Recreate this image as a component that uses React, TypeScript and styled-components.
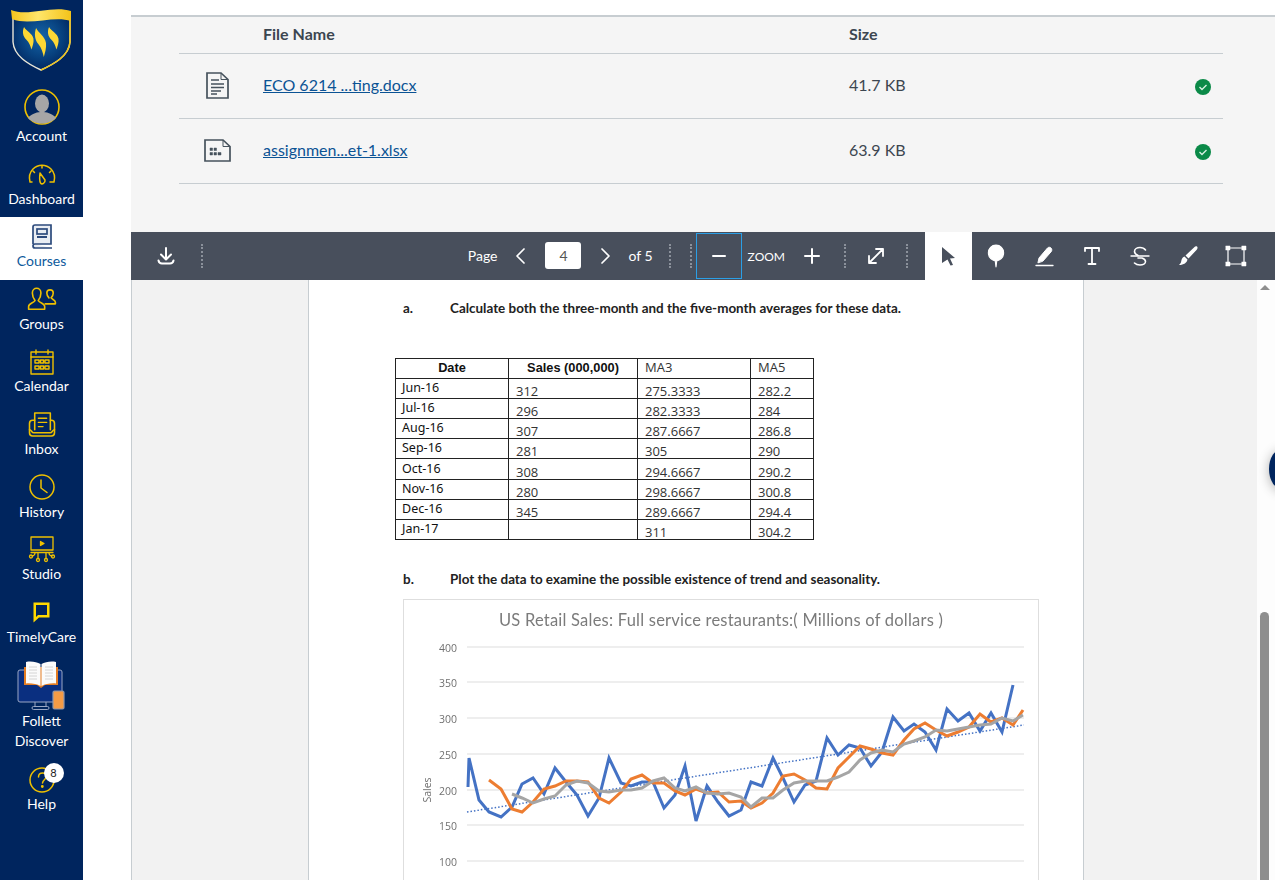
import { FC, ReactNode } from "react";
import styled, { createGlobalStyle } from "styled-components";

const NAVY = "#00255e";
const GOLD = "#eec000";
const BAR = "#484f5c";
const FLAME = "M1 0 C 3 5 9 8 10 15 C 10.500 20 9 25 8 29 C 7 24 6 20 3 16 C 0 12 -1 6 1 0 Z";

// アイコン
const Stroke: FC<{ w?: number; h?: number; box: string; color?: string; sw?: number; children: ReactNode }> = ({
  w = 30,
  h = 30,
  box,
  color = GOLD,
  sw = 1.5,
  children,
}) => (
  <svg width={w} height={h} viewBox={box} fill="none" stroke={color} strokeWidth={sw} strokeLinecap="round" strokeLinejoin="round">
    {children}
  </svg>
);

const LogoIcon = () => (
  <svg width="62" height="64" viewBox="0 0 62 64">
    <defs>
      <radialGradient id="shieldFill" cx="50%" cy="42%" r="60%">
        <stop offset="0%" stopColor="#1565a8" />
        <stop offset="60%" stopColor="#07417f" />
        <stop offset="100%" stopColor="#00255e" />
      </radialGradient>
      <linearGradient id="bannerFill" x1="0" x2="1" y1="0" y2="0">
        <stop offset="0%" stopColor="#f7c51c" />
        <stop offset="45%" stopColor="#ffe66b" />
        <stop offset="100%" stopColor="#f3c31a" />
      </linearGradient>
    </defs>
    <path d="M3 5 C 20 12 42 1 60 6 L60 34 C59 48 44 56 31 62 C18 56 4 48 3 34 Z" fill="url(#shieldFill)" stroke="#e8e6d8" strokeWidth="1.4" />
    <path d="M60 8 L60 34 C59 48 44 56 31 62" fill="none" stroke="#f0c419" strokeWidth="1.6" />
    <path d="M1 2 C 18 9 42 -3 61 3 L61 13 C 44 7 20 18 2 11 Z" fill="url(#bannerFill)" />
    <path d={FLAME} fill="#fdd835" transform="translate(13 19) scale(1.05 .78)" />
    <path d={FLAME} fill="#fdd835" transform="translate(25 20) scale(1.1 1)" />
    <path d={FLAME} fill="#fdd835" transform="translate(38 19) scale(1.05 .78)" />
  </svg>
);

const AvatarIcon = () => (
  <AvatarSvg width="36" height="36" viewBox="0 0 36 36">
    <circle cx="18" cy="18" r="17" fill={NAVY} stroke={GOLD} strokeWidth="1.6" />
    <ellipse cx="18" cy="14.5" rx="7" ry="9" fill="#a6a6a6" />
    <path d="M4 29 C 8 24 14 23 18 23 C 22 23 28 24 32 29 C 28 33 23 34.5 18 34.5 C 13 34.5 8 33 4 29 Z" fill="#a6a6a6" />
  </AvatarSvg>
);

const DashboardIcon = () => (
  <Stroke box="0 0 30 24" h={24}>
    <path d="M5 20 H3 C1.5 14 3 10 6 7 C 11 2 19 2 24 7 C 27 10 28.5 14 27 20 H23" />
    <path d="M15 4 V6 M6 9 L7.5 10.5 M24 9 L22.5 10.5" />
    <path d="M13 11 L18 18 C18.5 21 15 23 13.5 21 C 12.5 19 12.5 15 13 11 Z" />
  </Stroke>
);

const CoursesIcon = () => (
  <svg width="22" height="26" viewBox="0 0 22 26" fill="none" stroke="#2c4a7c" strokeWidth="1.7">
    <path d="M2 20 V3 C2 2 3 1 4 1 H20 V20 H4 C3 20 2 21 2 22 C2 23 3 24 4 24 H21" fill="#e9edf3" />
    <rect x="6" y="5" width="10" height="5" />
    <path d="M6 13 H16" strokeWidth="2" />
  </svg>
);

const GroupsIcon = () => (
  <Stroke box="0 0 28 22" h={24}>
    <path d="M1.5 20.5 V18 C1.5 15 6 15 7.5 12.5 C5.5 10 5 8 5 5.5 C5 2.5 7 1 9 1 C11 1 13 2.5 13 5.5 C13 8 12.5 10 10.5 12.5 C12 15 16.5 15 16.5 18 V20.5 Z" />
    <path d="M17 15.5 H26.5 V14 C26.5 12 23.5 11.5 22.5 10 C24 8.5 24.5 7 24.5 5.5 C24.5 3.5 23 2.5 21.5 2.5 C20 2.5 18.5 3.5 18.5 5.5 C18.5 7 19 8.5 20.5 10" />
  </Stroke>
);

const CalendarIcon = () => (
  <Stroke box="0 0 24 26" h={26} sw={1.4}>
    <rect x="1" y="3" width="22" height="22" />
    <path d="M1 8 H23 M6 1 V5 M18 1 V5" />
    <path d="M5 11 H9 V14 H5 Z M10.500 11 H13.500 V14 H10.500 Z M15 11 H19 V14 H15 Z M5 17 H9 V20 H5 Z M10.500 17 H13.500 V20 H10.500 Z M15 17 H19 V20 H15 Z" />
  </Stroke>
);

const InboxIcon = () => (
  <Stroke box="0 0 26 24" h={25}>
    <path d="M6 17 V1 H21 V17" />
    <path d="M9.500 6 H17.500 M9.500 10 H17.500 M9.500 14 H14" strokeWidth="1.3" />
    <path d="M6 8 H4 C2.500 8 1 9 1 11 V20 C1 22 2 23 4 23 H22 C24 23 25 22 25 20 V11 C25 9 23.500 8 22 8 H21" />
    <path d="M1 17 C3 17 3 20 5 20 H21 C23 20 23 17 25 17" />
  </Stroke>
);

const HistoryIcon = () => (
  <Stroke box="0 0 26 26" h={26}>
    <circle cx="13" cy="13" r="12" />
    <path d="M12 6 V14 L18 18.500" />
  </Stroke>
);

const StudioIcon = () => (
  <Stroke box="0 0 26 27" h={27} sw={1.3}>
    <path d="M2 1 H24 V14 H2 Z M2 16.500 H24" />
    <path d="M11.500 5.500 L15 7.500 L11.500 9.500 Z" fill={GOLD} />
    <path d="M9 17 V22 M17 17 V22 M6 17 C6 19 4 20 3 20 M20 17 C20 19 22 20 23 20" />
    <circle cx="2" cy="20.500" r="1.500" />
    <circle cx="9" cy="24" r="1.500" />
    <circle cx="17" cy="24" r="1.500" />
    <circle cx="24" cy="20.500" r="1.500" />
  </Stroke>
);

const TimelyCareIcon = () => (
  <svg width="17" height="21" viewBox="0 0 17 21">
    <path d="M0.500 0.500 H16.500 V15.500 H6 L0.500 20.500 Z" fill="#ffd900" />
    <path d="M3 3 H14 V13 H5 L3 15 Z" fill={NAVY} />
  </svg>
);

const FollettIcon = () => (
  <svg width="50" height="50" viewBox="0 0 50 50">
    <rect x="1" y="9" width="44" height="32" rx="2" fill="#0a2f80" stroke="#9aa7c4" strokeWidth="1" />
    <path d="M18 41 V46 M29 41 V46" stroke="#9aa7c4" />
    <rect x="15" y="45.500" width="17" height="3" rx="1.500" fill="none" stroke="#9aa7c4" />
    <path d="M7 6 H41 V24 H28 L24 27 L20 24 H7 Z" fill="#e37c23" />
    <path d="M9 1 C 14 0 20 1 23.500 3 V25 C 20 23 14 22 9 22.500 Z M39 1 C 34 0 28 1 24.500 3 V25 C 28 23 34 22 39 22.500 Z" fill="#fbfbfb" />
    <path d="M12 6 H20 M12 9 H20 M12 12 H20 M12 15 H20 M12 18 H20 M28 6 H36 M28 9 H36 M28 12 H36 M28 15 H36 M28 18 H36" stroke="#d4d4d4" strokeWidth="1" />
    <rect x="36" y="30" width="11" height="18" rx="1.500" fill="#f59b45" stroke="#8d97ad" strokeWidth="1.2" />
  </svg>
);

const HelpIcon = () => (
  <Stroke box="0 0 26 26" h={26}>
    <circle cx="13" cy="13" r="12" />
    <path d="M9.500 10 C9.500 7.500 11 6 13.500 6 C16 6 17.500 7.500 17.500 9.500 C17.500 12 14 12.500 13.500 16" />
    <circle cx="13.300" cy="19.500" r="0.700" fill={GOLD} />
  </Stroke>
);

const DocFileIcon = () => (
  <svg width="23" height="27" viewBox="0 0 23 27" fill="none" stroke="#46525c" strokeWidth="1.700">
    <path d="M1 1 H15 L22 7.500 V26 H1 Z" />
    <path d="M15 1 V7.500 H22" strokeWidth="1" />
    <path d="M5 8 H13 M5 12 H18 M5 15.500 H18 M5 19 H15 M5 22 H11" strokeWidth="1.500" />
  </svg>
);

const SheetFileIcon = () => (
  <svg width="27" height="23" viewBox="0 0 27 23" fill="none" stroke="#46525c" strokeWidth="1.700">
    <path d="M1 1 H19 L26 7.500 V22 H1 Z" />
    <path d="M19 1 V7.500 H26" strokeWidth="1" />
    <path d="M6 9 H8.500 V11.500 H6 Z M10 9 H12.500 V11.500 H10 Z M6 13.500 H8.500 V16 H6 Z M10 13.500 H12.500 V16 H10 Z M14 13.500 H17 V16 H14 Z" fill="#46525c" strokeWidth="0.500" />
  </svg>
);

const CheckIcon = () => (
  <CheckSvg width="16" height="16" viewBox="0 0 16 16">
    <circle cx="8" cy="8" r="8" fill="#0b8a48" />
    <path d="M4.500 8 L7 10.500 L11.500 6" fill="none" stroke="#d6f0e1" strokeWidth="1.400" />
  </CheckSvg>
);

// ツールバーのアイコン
const White: FC<{ size?: number; sw?: number; children: ReactNode }> = ({ size = 22, sw = 2, children }) => (
  <svg width={size} height={size} viewBox="0 0 22 22" fill="none" stroke="#fff" strokeWidth={sw} strokeLinecap="round" strokeLinejoin="round">
    {children}
  </svg>
);

const toolIcons: ReactNode[] = [
  <White key="pin" size={24}>
    <path d="M11 21 L10.300 15.500 C7 14.500 4 12 4 8 C4 4 7 1 11 1 C15 1 18 4 18 8 C18 12 15 14.500 11.700 15.500 Z" fill="#fff" stroke="#fff" strokeWidth="1" />
  </White>,
  <White key="highlighter">
    <path d="M3 20.500 H20" strokeWidth="1.300" />
    <path d="M5 17.500 L6 13 L14.500 3 C15.500 2 17 2 18 3 C19 4 19 5.500 18.300 6.500 L10 16 Z" fill="#fff" stroke="#fff" strokeWidth="1" />
  </White>,
  <White key="text">
    <path d="M4 6 V3 H18 V6 M11 3 V19 M7.500 19 H14.500" strokeWidth="1.800" />
  </White>,
  <White key="strike">
    <path d="M2 11 H20" strokeWidth="1.400" />
    <path d="M16.500 5 C15 3 13 2.500 11 2.500 C8 2.500 5.500 4 5.500 6.500 C5.500 8.500 7 9.500 9 10.500 M9 13 H13 C15.500 14 16.500 15 16.500 16.500 C16.500 18.500 14 20 11 20 C9 20 7 19.500 5.500 18" strokeWidth="1.600" />
  </White>,
  <White key="brush">
    <path d="M20 1.500 C21 2.500 20.500 4 19.500 5 L11.500 13.500 L8.500 10.500 L17 2.500 C18 1.500 19 1 20 1.500 Z M7.500 11.500 L10.500 14.500 C10 17.500 7 20 2 20 C4 18.500 4 17 4.500 15 C5 13 6 12 7.500 11.500 Z" fill="#fff" stroke="none" />
  </White>,
  <White key="rect">
    <path d="M3 3 H19 V19 H3 Z" strokeWidth="1.200" />
    <path d="M1 1 H5 V5 H1 Z M17 1 H21 V5 H17 Z M1 17 H5 V21 H1 Z M17 17 H21 V21 H17 Z" fill="#fff" strokeWidth="0.500" />
  </White>,
];

// データ
const navItems: { label: string; icon: ReactNode; active?: boolean }[] = [
  { label: "Account", icon: <AvatarIcon /> },
  { label: "Dashboard", icon: <DashboardIcon /> },
  { label: "Courses", icon: <CoursesIcon />, active: true },
  { label: "Groups", icon: <GroupsIcon /> },
  { label: "Calendar", icon: <CalendarIcon /> },
  { label: "Inbox", icon: <InboxIcon /> },
  { label: "History", icon: <HistoryIcon /> },
  { label: "Studio", icon: <StudioIcon /> },
  { label: "TimelyCare", icon: <TimelyCareIcon /> },
];

const files = [
  { name: "ECO 6214 ...ting.docx", size: "41.7 KB", icon: <DocFileIcon /> },
  { name: "assignmen...et-1.xlsx", size: "63.9 KB", icon: <SheetFileIcon /> },
];

const rows = [
  ["Jun-16", "312", "275.3333", "282.2"],
  ["Jul-16", "296", "282.3333", "284"],
  ["Aug-16", "307", "287.6667", "286.8"],
  ["Sep-16", "281", "305", "290"],
  ["Oct-16", "308", "294.6667", "290.2"],
  ["Nov-16", "280", "298.6667", "300.8"],
  ["Dec-16", "345", "289.6667", "294.4"],
  ["Jan-17", "", "311", "304.2"],
];

// グラフ(ページ座標そのまま)
const blue =
  "468,787 469,758 479,800 489,812 501,817 512,807 522,784 533,778 544,794 555,768 566,782 577,795 588,816 599,798 609,758 621,783 631,786 642,782 653,782 664,808 675,795 685,766 696,821 707,786 718,802 729,816 741,810 751,782 762,786 773,758 783,778 794,802 805,785 816,781 827,738 838,755 849,745 860,748 871,766 882,752 893,717 904,731 914,724 925,732 936,750 947,709 958,721 969,713 980,731 991,713 1002,732 1013,685";
const orange =
  "489,780 501,789 512,809 522,812 533,802 544,789 555,786 566,781 577,781 588,782 599,798 609,803 621,792 631,779 642,775 653,783 664,783 675,791 685,795 696,789 707,793 718,792 729,802 741,801 751,808 762,803 773,793 783,776 794,774 805,780 816,788 827,789 838,768 849,757 860,746 871,749 882,753 893,755 904,740 914,729 925,723 936,730 947,736 958,732 969,727 980,714 991,722 1002,718 1013,725 1023,710";
const gray =
  "512,794 522,798 533,803 544,799 555,796 566,785 577,781 588,783 599,791 609,792 621,790 631,790 642,788 653,781 664,778 675,788 685,791 696,787 707,793 718,794 729,793 741,797 751,807 762,798 773,798 783,790 794,783 805,781 816,781 827,781 838,777 849,772 860,760 871,753 882,750 893,752 904,744 914,741 925,737 936,730 947,731 958,729 969,727 980,725 991,724 1002,718 1013,721 1023,715";
const ticks = [
  [400, 647],
  [350, 682],
  [300, 718],
  [250, 754],
  [200, 790],
  [150, 825],
  [100, 861],
];

const SalesChart = () => (
  <ChartSvg width="634" height="290" viewBox="404 600 634 290">
    <text x="721" y="626" textAnchor="middle" fontFamily="Lato, sans-serif" fontSize="16.500" letterSpacing="0.22" fill="#7b7b7b">
      US Retail Sales: Full service restaurants:( Millions of dollars )
    </text>
    {ticks.map(([v, y]) => (
      <g key={v}>
        <line x1="467" x2="1024" y1={y} y2={y} stroke="#e8e8e8" strokeWidth="1.500" />
        <text x="457" y={y + 4.500} textAnchor="end" fontFamily="Open Sans, sans-serif" fontSize="10.500" fill="#707070">
          {v}
        </text>
      </g>
    ))}
    <text transform="translate(431 790) rotate(-90)" textAnchor="middle" fontFamily="Open Sans, sans-serif" fontSize="10.500" fill="#707070">
      Sales
    </text>
    <line x1="467" y1="812" x2="1024" y2="725" stroke="#4472c4" strokeWidth="1.500" strokeDasharray="1.500 2" />
    <polyline points={blue} fill="none" stroke="#4472c4" strokeWidth="3" />
    <polyline points={orange} fill="none" stroke="#ed7d31" strokeWidth="3" />
    <polyline points={gray} fill="none" stroke="#a5a5a5" strokeWidth="3" />
  </ChartSvg>
);

const App: FC = () => (
  <>
    <GlobalStyle />
    <Shell>
      <SideNav>
        <LogoBox>
          <LogoIcon />
        </LogoBox>
        {navItems.map((item) => (
          <NavItem key={item.label} $active={item.active}>
            <NavIcon>{item.icon}</NavIcon>
            <NavLabel $active={item.active}>{item.label}</NavLabel>
          </NavItem>
        ))}
        <NavItem $tall>
          <NavIcon $tall>
            <FollettIcon />
          </NavIcon>
          <NavLabel>Follett</NavLabel>
          <NavLabel>Discover</NavLabel>
        </NavItem>
        <NavItem>
          <NavIcon>
            <HelpIcon />
            <Badge>8</Badge>
          </NavIcon>
          <NavLabel>Help</NavLabel>
        </NavItem>
      </SideNav>

      <Main>
        <FilePanel>
          <FileHead>
            <span />
            <HeadCell>File Name</HeadCell>
            <HeadCell>Size</HeadCell>
          </FileHead>
          {files.map((file) => (
            <FileRow key={file.name}>
              <FileIconCell>{file.icon}</FileIconCell>
              <FileName>
                <FileLink href="#">{file.name}</FileLink>
              </FileName>
              <SizeCell>
                <SizeText>{file.size}</SizeText>
                <CheckIcon />
              </SizeCell>
            </FileRow>
          ))}
        </FilePanel>

        <Toolbar>
          <ToolButton $w={70}>
            <White>
              <path d="M11 3 V14 M6 9.500 L11 14.500 L16 9.500 M3.500 15.500 C4 18 5 18.500 7 18.500 H15 C17 18.500 18 18 18.500 15.500" />
            </White>
          </ToolButton>
          <DotSep />
          <Spacer />
          <BarText>Page</BarText>
          <ToolButton $w={48}>
            <White sw={1.700}>
              <path d="M14 4 L7 11 L14 18" />
            </White>
          </ToolButton>
          <PageInput>4</PageInput>
          <ToolButton $w={47}>
            <White sw={1.700}>
              <path d="M8 4 L15 11 L8 18" />
            </White>
          </ToolButton>
          <BarText>of 5</BarText>
          <DotSep $ml={16} />
          <DotSep $ml={19} />
          <MinusButton>
            <White>
              <path d="M5 11 H17" />
            </White>
          </MinusButton>
          <ZoomText>ZOOM</ZoomText>
          <ToolButton $w={44} $ml={5}>
            <White>
              <path d="M11 4 V18 M4 11 H18" />
            </White>
          </ToolButton>
          <DotSep $ml={10} />
          <ToolButton $w={60}>
            <White sw={1.800}>
              <path d="M4 18 L18 4 M11 4 H18 V11 M4 11 V18 H11" />
            </White>
          </ToolButton>
          <DotSep />
          <ActiveTool>
            <svg width="16" height="20" viewBox="0 0 16 20">
              <path d="M1 1 L14 12 L9 12.500 L12 19 L9.500 19.500 L6.500 13.500 L1 17 Z" fill={BAR} />
            </svg>
          </ActiveTool>
          {toolIcons.map((icon, index) => (
            <ToolButton $w={48} key={index}>
              {icon}
            </ToolButton>
          ))}
          <BarEnd />
        </Toolbar>

        <Viewer>
          <Gutter />
          <PdfPage>
            <Question>
              <QuestionMark>a.</QuestionMark>
              <span>Calculate both the three-month and the five-month averages for these data.</span>
            </Question>
            <SalesTable>
              <colgroup>
                <col width="113" />
                <col width="129" />
                <col width="113" />
                <col width="63" />
              </colgroup>
              <thead>
                <tr>
                  <HeadTh>Date</HeadTh>
                  <HeadTh>Sales (000,000)</HeadTh>
                  <PlainTh>MA3</PlainTh>
                  <PlainTh>MA5</PlainTh>
                </tr>
              </thead>
              <tbody>
                {rows.map(([date, sales, ma3, ma5]) => (
                  <tr key={date}>
                    <DateCell>{date}</DateCell>
                    <NumCell>{sales}</NumCell>
                    <NumCell>{ma3}</NumCell>
                    <NumCell>{ma5}</NumCell>
                  </tr>
                ))}
              </tbody>
            </SalesTable>
            <Question $second>
              <QuestionMark>b.</QuestionMark>
              <span>Plot the data to examine the possible existence of trend and seasonality.</span>
            </Question>
            <ChartFrame>
              <SalesChart />
            </ChartFrame>
          </PdfPage>
          <Gutter $grow />
          <ScrollTrack>
            <ScrollArrow />
            <ScrollThumb />
          </ScrollTrack>
          <FloatingDot />
        </Viewer>
      </Main>
    </Shell>
  </>
);

export default App;

const GlobalStyle = createGlobalStyle`
  html, body {
    margin: 0;
    height: 880px;
    overflow: hidden;
    background: #fff;
    font-family: Lato, "Liberation Sans", sans-serif;
  }
  * {
    box-sizing: border-box;
  }
`;

const Shell = styled.div`
  display: flex;
  height: 880px;
`;

const SideNav = styled.nav`
  flex: 0 0 83px;
  background: ${NAVY};
`;

const LogoBox = styled.div`
  height: 92px;
  padding: 8px 0 0 10px;
`;

const NavItem = styled.div<{ $active?: boolean; $tall?: boolean }>`
  height: ${(p) => (p.$tall ? "105px" : "62.6px")};
  padding-top: 5px;
  display: flex;
  flex-direction: column;
  align-items: center;
  background: ${(p) => (p.$active ? "#fff" : "transparent")};
`;

const NavIcon = styled.div<{ $tall?: boolean }>`
  position: relative;
  height: ${(p) => (p.$tall ? "51px" : "29px")};
  display: flex;
  align-items: center;
  justify-content: center;
`;

const AvatarSvg = styled.svg`
  margin-bottom: 9px;
`;

const NavLabel = styled.div<{ $active?: boolean }>`
  font-size: 14px;
  line-height: 20px;
  color: ${(p) => (p.$active ? "#0e5a9c" : "#fff")};
  white-space: nowrap;
`;

const Badge = styled.span`
  position: absolute;
  top: -2px;
  left: 17px;
  width: 20px;
  height: 20px;
  border-radius: 50%;
  background: #fff;
  color: #222;
  font-size: 11px;
  line-height: 20px;
  text-align: center;
`;

const Main = styled.main`
  flex: 1;
  margin-left: 48px;
  padding-top: 15px;
  display: flex;
  flex-direction: column;
  min-width: 0;
`;

const FilePanel = styled.section`
  height: 217px;
  padding: 0 52px 0 48px;
  background: #f5f5f5;
  border-top: 2px solid #c7cdd1;
  color: #2d3b45;
`;

const FileHead = styled.div`
  display: grid;
  grid-template-columns: 84px 586px 1fr;
  height: 37px;
  align-items: center;
  border-bottom: 1px solid #c7cdd1;
`;

const HeadCell = styled.div`
  padding-bottom: 4px;
  font-size: 16px;
  font-weight: 700;
  color: #3c4650;
`;

const FileRow = styled.div`
  display: grid;
  grid-template-columns: 84px 586px 1fr;
  height: 65px;
  align-items: center;
  border-bottom: 1px solid #c7cdd1;
`;

const FileIconCell = styled.div`
  display: flex;
  justify-content: center;
  padding: 0 8px 1px 0;
`;

const FileName = styled.div`
  padding-bottom: 4px;
  font-size: 16px;
`;

const FileLink = styled.a`
  color: #0b5394;
  text-decoration: underline;
`;

const SizeCell = styled.div`
  display: flex;
  align-items: center;
  justify-content: space-between;
  padding-right: 12px;
  font-size: 16px;
  color: #3c4650;
`;

const SizeText = styled.span`
  padding-bottom: 4px;
`;

const CheckSvg = styled.svg`
  margin-top: 2px;
`;

const Toolbar = styled.div`
  height: 48px;
  flex: none;
  display: flex;
  align-items: center;
  background: ${BAR};
  color: #fff;
  font-size: 14px;
`;

const ToolButton = styled.div<{ $w: number; $ml?: number }>`
  flex: 0 0 ${(p) => p.$w}px;
  margin-left: ${(p) => p.$ml ?? 0}px;
  height: 48px;
  display: flex;
  align-items: center;
  justify-content: center;
`;

const DotSep = styled.div<{ $ml?: number }>`
  flex: none;
  width: 2px;
  height: 24px;
  margin-left: ${(p) => p.$ml ?? 0}px;
  border-left: 2px dotted #8b919b;
`;

const Spacer = styled.div`
  flex: 1;
`;

const BarText = styled.span`
  flex: none;
  padding-bottom: 1px;
  font-size: 14px;
`;

const PageInput = styled.div`
  flex: 0 0 36px;
  height: 27px;
  margin-bottom: 1px;
  background: #fff;
  border-radius: 3px;
  color: #555;
  font-size: 14px;
  line-height: 27px;
  text-align: center;
`;

const MinusButton = styled.div`
  flex: 0 0 46px;
  height: 46px;
  margin-left: 4px;
  display: flex;
  align-items: center;
  justify-content: center;
  border: 1px solid #2b9fe6;
`;

const ZoomText = styled.span`
  flex: none;
  margin-left: 6px;
  font-size: 12px;
`;

const ActiveTool = styled.div`
  flex: 0 0 47px;
  height: 48px;
  margin-left: 17px;
  display: flex;
  align-items: center;
  justify-content: center;
  background: #fff;
`;

const BarEnd = styled.div`
  flex: 0 0 15px;
`;

const Viewer = styled.div`
  position: relative;
  height: 600px;
  display: flex;
  overflow: hidden;
`;

const Gutter = styled.div<{ $grow?: boolean }>`
  flex: ${(p) => (p.$grow ? "1" : "0 0 177px")};
  background: #f2f2f2;
  border-left: ${(p) => (p.$grow ? "none" : "1px solid #c7cdd1")};
`;

const PdfPage = styled.div`
  flex: 0 0 776px;
  padding: 20px 0 0 94px;
  background: #fff;
  border-left: 1px solid #c7cdd1;
  border-right: 1px solid #c7cdd1;
  font-family: "Open Sans", sans-serif;
  color: #111;
`;

const Question = styled.div<{ $second?: boolean }>`
  display: flex;
  height: 17px;
  margin-top: ${(p) => (p.$second ? "31px" : "0")};
  font-family: Lato, sans-serif;
  font-size: 13.450px;
  line-height: 17px;
  font-weight: 700;
  color: #222;
  white-space: nowrap;
`;

const QuestionMark = styled.span`
  flex: 0 0 47px;
`;

const SalesTable = styled.table`
  margin: 41px 0 0 -8px;
  width: 418px;
  table-layout: fixed;
  border-collapse: collapse;
  border: 1.500px solid #222;
  font-size: 12px;

  tr {
    height: 20.100px;
  }
`;

const HeadTh = styled.th`
  padding: 0 0 2px;
  border: 1px solid #222;
  font-family: "Liberation Sans", sans-serif;
  font-size: 12.800px;
  line-height: 15px;
  text-align: center;
`;

const PlainTh = styled.th`
  padding: 0 0 2px 7px;
  border: 1px solid #222;
  font-weight: 400;
  font-size: 13px;
  line-height: 15px;
  text-align: left;
  color: #333;
`;

const DateCell = styled.td`
  padding: 0 0 2px 6px;
  border: 1px solid #222;
  font-family: "Noto Sans", sans-serif;
  font-size: 12.500px;
  line-height: 15px;
`;

const NumCell = styled.td`
  padding: 5px 0 0 7px;
  border: 1px solid #222;
  font-size: 13px;
  line-height: 14px;
  color: #333;
`;

const ChartFrame = styled.div`
  width: 636px;
  height: 300px;
  margin-top: 11px;
  border: 1px solid #dedede;
`;

const ChartSvg = styled.svg`
  display: block;
  filter: blur(0.3px);
`;

const ScrollTrack = styled.div`
  flex: 0 0 18px;
  display: flex;
  flex-direction: column;
  align-items: center;
  background: #fdfdfd;
`;

const ScrollArrow = styled.div`
  width: 0;
  height: 0;
  margin: 5px 0 0 -3px;
  border-left: 5px solid transparent;
  border-right: 5px solid transparent;
  border-bottom: 5px solid #8e8e8e;
`;

const ScrollThumb = styled.div`
  width: 9px;
  height: 268px;
  margin: auto 0 0 -3px;
  border-radius: 5px 5px 0 0;
  background: #8e8e8e;
`;

const FloatingDot = styled.div`
  position: absolute;
  top: 169px;
  right: -20px;
  width: 26px;
  height: 40px;
  border-radius: 50%;
  background: ${NAVY};
  box-shadow: 0 2px 12px rgba(0, 0, 0, 0.3);
`;
